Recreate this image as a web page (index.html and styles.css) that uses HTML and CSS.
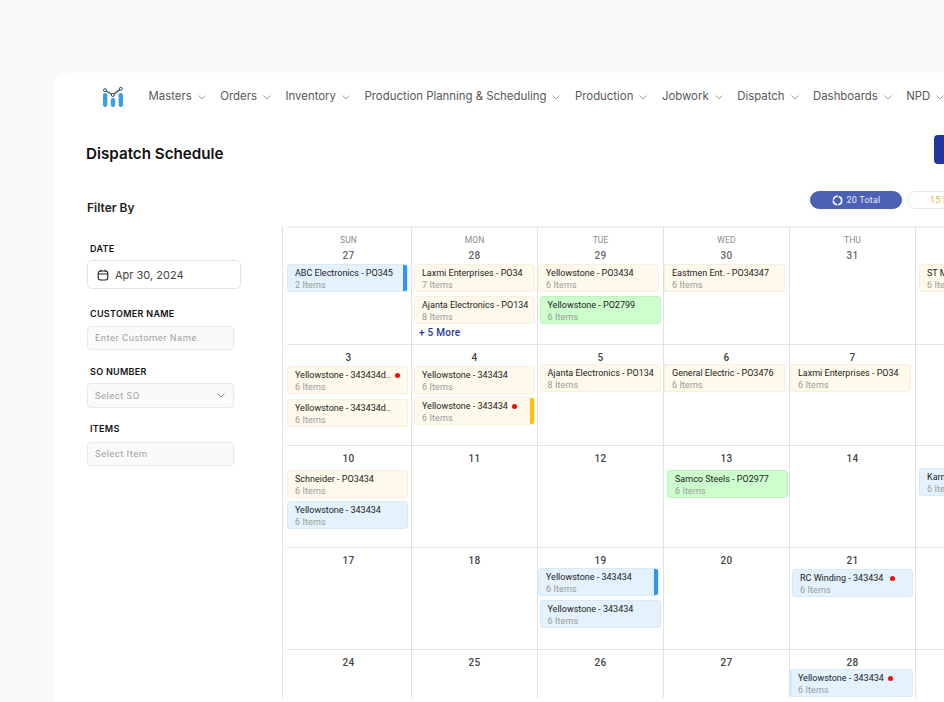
FILE: index.html
```html
<!DOCTYPE html>
<html lang="en">
<head>
<meta charset="utf-8">
<title>Dispatch Schedule</title>
<link rel="stylesheet" href="styles.css">
</head>
<body>
<div class="card">
  <nav class="nav">
    <svg class="logo" width="22" height="20" viewBox="0 0 22 20">
      <rect x="1" y="6" width="4.4" height="14" rx="2.2" fill="#3a9fe2"/>
      <rect x="8.8" y="11" width="4.4" height="9" rx="2.2" fill="#3a9fe2"/>
      <rect x="16.6" y="6" width="4.4" height="14" rx="2.2" fill="#3a9fe2"/>
      <path d="M3 3.2 L10.8 8 L18.8 1.8" fill="none" stroke="#2c4a63" stroke-width="1.3"/>
      <circle cx="3" cy="3.2" r="1.5" fill="#fff" stroke="#2c4a63"/>
      <circle cx="10.8" cy="8" r="1.5" fill="#fff" stroke="#2c4a63"/>
      <circle cx="18.8" cy="1.8" r="1.5" fill="#fff" stroke="#2c4a63"/>
    </svg>
    <ul class="menu">
      <li class="menu-item">Masters<svg class="chev" viewBox="0 0 8 5"><path d="M.5.5 4 4 7.5.5"/></svg></li>
      <li class="menu-item">Orders<svg class="chev" viewBox="0 0 8 5"><path d="M.5.5 4 4 7.5.5"/></svg></li>
      <li class="menu-item">Inventory<svg class="chev" viewBox="0 0 8 5"><path d="M.5.5 4 4 7.5.5"/></svg></li>
      <li class="menu-item">Production Planning &amp; Scheduling<svg class="chev" viewBox="0 0 8 5"><path d="M.5.5 4 4 7.5.5"/></svg></li>
      <li class="menu-item">Production<svg class="chev" viewBox="0 0 8 5"><path d="M.5.5 4 4 7.5.5"/></svg></li>
      <li class="menu-item">Jobwork<svg class="chev" viewBox="0 0 8 5"><path d="M.5.5 4 4 7.5.5"/></svg></li>
      <li class="menu-item">Dispatch<svg class="chev" viewBox="0 0 8 5"><path d="M.5.5 4 4 7.5.5"/></svg></li>
      <li class="menu-item">Dashboards<svg class="chev" viewBox="0 0 8 5"><path d="M.5.5 4 4 7.5.5"/></svg></li>
      <li class="menu-item">NPD<svg class="chev" viewBox="0 0 8 5"><path d="M.5.5 4 4 7.5.5"/></svg></li>
    </ul>
  </nav>

  <header class="title-row">
    <h1 class="title">Dispatch Schedule</h1>
    <div class="primary-btn"></div>
  </header>

  <div class="filter-row">
    <h2 class="filter-title">Filter By</h2>
    <div class="pills">
      <span class="pill pill-total">
        <svg class="ring" width="11" height="11" viewBox="0 0 11 11"><circle cx="5.5" cy="5.5" r="4.2" fill="none" stroke="#fff" stroke-width="1.6" stroke-dasharray="6 0.9"/></svg>20 Total
      </span>
      <span class="pill pill-open">15 In Progress</span>
    </div>
  </div>

  <main class="main">
    <aside class="filters">
      <label class="label label-date">DATE</label>
      <div class="date-field">
        <svg width="12" height="12" viewBox="0 0 12 12" fill="none" stroke="#222" stroke-width="1.1"><rect x="1.2" y="2" width="9.6" height="9" rx="2.4"/><path d="M1.2 5h9.6M3.8.8v2M8.2.8v2"/></svg>
        <span>Apr 30, 2024</span>
      </div>
      <label class="label label-customer">CUSTOMER NAME</label>
      <div class="field">Enter Customer Name</div>
      <label class="label">SO NUMBER</label>
      <div class="field">Select SO<svg class="field-chev" viewBox="0 0 8 5"><path d="M.5.5 4 4 7.5.5"/></svg></div>
      <label class="label">ITEMS</label>
      <div class="field field-last">Select Item</div>
    </aside>

    <section class="calendar">
      <div class="grid">
        <!-- Row 1 -->
        <div class="cell prev"><div class="dow">SUN</div><div class="num">27</div>
          <div class="ev blue"><div class="ev-t">ABC Electronics - PO345</div><div class="ev-s">2 Items</div><i class="bar bar-blue"></i></div>
        </div>
        <div class="cell prev in-2"><div class="dow">MON</div><div class="num">28</div>
          <div class="ev yellow"><div class="ev-t">Laxmi Enterprises - PO34</div><div class="ev-s">7 Items</div></div>
          <div class="ev yellow"><div class="ev-t">Ajanta Electronics - PO134</div><div class="ev-s">8 Items</div></div>
          <div class="more">+ 5 More</div>
        </div>
        <div class="cell prev"><div class="dow">TUE</div><div class="num">29</div>
          <div class="ev yellow"><div class="ev-t">Yellowstone - PO3434</div><div class="ev-s">6 Items</div></div>
          <div class="ev green nudge-2"><div class="ev-t">Yellowstone - PO2799</div><div class="ev-s">6 Items</div></div>
        </div>
        <div class="cell prev"><div class="dow">WED</div><div class="num">30</div>
          <div class="ev yellow stub-line"><div class="ev-t">Eastmen Ent. - PO34347</div><div class="ev-s">6 Items</div></div>
        </div>
        <div class="cell prev"><div class="dow">THU</div><div class="num">31</div></div>
        <div class="cell in-3 no-right"><div class="dow">FRI</div><div class="num">1</div>
          <div class="ev yellow"><div class="ev-t">ST Metals - PO3434</div><div class="ev-s">6 Items</div></div>
        </div>

        <!-- Row 2 -->
        <div class="cell wk"><div class="num">3</div>
          <div class="ev yellow"><div class="ev-t">Yellowstone - 343434d..<i class="dot"></i></div><div class="ev-s">6 Items</div></div>
          <div class="ev yellow gap-5"><div class="ev-t">Yellowstone - 343434d..</div><div class="ev-s">6 Items</div></div>
        </div>
        <div class="cell wk in-2"><div class="num">4</div>
          <div class="ev yellow"><div class="ev-t">Yellowstone - 343434</div><div class="ev-s">6 Items</div></div>
          <div class="ev yellow gap-3"><div class="ev-t">Yellowstone - 343434<i class="dot"></i></div><div class="ev-s">6 Items</div><i class="bar bar-yellow"></i></div>
        </div>
        <div class="cell wk"><div class="num">5</div>
          <div class="ev yellow nudge-2 top-1"><div class="ev-t">Ajanta Electronics - PO134</div><div class="ev-s">8 Items</div></div>
        </div>
        <div class="cell wk"><div class="num">6</div>
          <div class="ev yellow top-1 stub-line"><div class="ev-t">General Electric - PO3476</div><div class="ev-s">6 Items</div></div>
        </div>
        <div class="cell wk"><div class="num">7</div>
          <div class="ev yellow top-1"><div class="ev-t">Laxmi Enterprises - PO34</div><div class="ev-s">6 Items</div></div>
        </div>
        <div class="cell wk no-right"><div class="num">8</div></div>

        <!-- Row 3 -->
        <div class="cell wk"><div class="num">10</div>
          <div class="ev yellow top-5"><div class="ev-t">Schneider - PO3434</div><div class="ev-s">6 Items</div></div>
          <div class="ev blue gap-3"><div class="ev-t">Yellowstone - 343434</div><div class="ev-s">6 Items</div></div>
        </div>
        <div class="cell wk"><div class="num">11</div></div>
        <div class="cell wk"><div class="num">12</div></div>
        <div class="cell wk in-3"><div class="num">13</div>
          <div class="ev green top-6"><div class="ev-t">Samco Steels - PO2977</div><div class="ev-s">6 Items</div></div>
        </div>
        <div class="cell wk"><div class="num">14</div></div>
        <div class="cell wk in-3 no-right"><div class="num">15</div>
          <div class="ev blue top-4"><div class="ev-t">Karnataka - PO3434</div><div class="ev-s">6 Items</div></div>
        </div>

        <!-- Row 4 -->
        <div class="cell wk"><div class="num">17</div></div>
        <div class="cell wk"><div class="num">18</div></div>
        <div class="cell wk"><div class="num">19</div>
          <div class="ev blue top-2"><div class="ev-t">Yellowstone - 343434</div><div class="ev-s">6 Items</div><i class="bar bar-blue"></i></div>
          <div class="ev blue nudge-2"><div class="ev-t">Yellowstone - 343434</div><div class="ev-s">6 Items</div></div>
        </div>
        <div class="cell wk"><div class="num">20</div></div>
        <div class="cell wk in-2"><div class="num">21</div>
          <div class="ev blue"><div class="ev-t">RC Winding - 343434<i class="dot dot-wide"></i></div><div class="ev-s">6 Items</div></div>
        </div>
        <div class="cell wk no-right"><div class="num">22</div></div>

        <!-- Row 5 -->
        <div class="cell wk last"><div class="num">24</div></div>
        <div class="cell wk last"><div class="num">25</div></div>
        <div class="cell wk last"><div class="num">26</div></div>
        <div class="cell wk last"><div class="num">27</div></div>
        <div class="cell wk last"><div class="num">28</div>
          <div class="ev blue top-1 ev-wide"><div class="ev-t">Yellowstone - 343434<i class="dot"></i></div><div class="ev-s">6 Items</div></div>
        </div>
        <div class="cell wk last no-right"><div class="num">29</div></div>
      </div>
    </section>
  </main>
</div>
</body>
</html>
```

FILE: styles.css
```css
* { box-sizing: border-box; }
html, body { height: 100%; }
body {
  margin: 0;
  height: 702px;
  overflow: hidden;
  background: #fafafa;
  padding: 73px 0 0 54px;
  font-family: Inter, "Liberation Sans", sans-serif;
  color: #111;
}
.card {
  width: 1100px;
  height: 629px;
  background: #fff;
  border-radius: 14px 0 0 0;
  overflow: hidden;
}
.nav {
  display: flex;
  align-items: center;
  height: 46px;
  padding-left: 48px;
}
.logo { flex: none; margin-top: 1px; }
.menu {
  display: flex;
  list-style: none;
  margin: 0 0 0 24.5px;
  padding: 0;
  gap: 14.5px;
  white-space: nowrap;
}
.menu-item {
  display: flex;
  align-items: center;
  font-size: 11.4px;
  color: #585858;
}
.chev { width: 8px; height: 5px; margin-left: 6px; margin-top: 2px; fill: none; stroke: #8a8a8a; stroke-width: .8; }

.title-row {
  display: flex;
  justify-content: space-between;
  height: 29px;
  margin-top: 16px;
  padding: 0 120px 0 32px;
}
.title { margin: 10px 0 0; font-size: 15.2px; line-height: 18px; font-weight: 600; color: #111; }
.primary-btn {
  width: 100px;
  height: 29px;
  background: #1f389f;
  border-radius: 4px;
}
.filter-row {
  display: flex;
  align-items: flex-start;
  justify-content: space-between;
  height: 18px;
  margin-top: 27px;
  padding-left: 33px;
}
.filter-title { margin: 8px 0 0; font-size: 12px; line-height: 18px; font-weight: 600; color: #222; }
.pills { display: flex; gap: 5px; width: 344px; }
.pill {
  display: flex;
  align-items: center;
  justify-content: center;
  height: 18px;
  border-radius: 9px;
  font-family: Roboto, sans-serif;
  font-size: 9px;
  letter-spacing: .2px;
  white-space: nowrap;
}
.pill-total { width: 92px; background: #4a61b5; color: #e8ebf8; gap: 4px; }
.pill-open {
  width: 100px;
  justify-content: flex-start;
  padding-left: 22px;
  background: #fff;
  border: 1.5px solid #e8e8e8;
  color: #e6b93a;
}
.ring { flex: none; }

.main { display: flex; margin-top: 17px; }
.filters {
  flex: none;
  width: 195px;
  margin-left: 33px;
  padding-top: 17px;
  display: flex;
  flex-direction: column;
  align-items: flex-start;
}
.label {
  font-size: 9px;
  font-weight: 600;
  letter-spacing: .3px;
  color: #111;
  margin-left: 3px;
  margin-top: 15.5px;
  line-height: 12px;
}
.label-date { margin-top: 0; }
.label-customer { margin-top: 19px; }
.date-field {
  display: flex;
  align-items: center;
  gap: 6px;
  width: 154px;
  height: 29px;
  margin-top: 5px;
  padding-left: 9px;
  border: 1px solid #e5e5e5;
  border-radius: 5px;
  font-size: 11px;
  color: #444;
}
.field {
  display: flex;
  align-items: center;
  justify-content: space-between;
  width: 147px;
  height: 24.5px;
  margin-top: 5.5px;
  padding: 0 7px;
  background: #fafafa;
  border: 1px solid #e8e8e8;
  border-radius: 4px;
  font-family: Roboto, sans-serif;
  font-size: 9.5px;
  letter-spacing: .45px;
  color: #a2a2a2;
}
.field-last { margin-top: 6.5px; height: 24px; }
.field-chev { width: 8px; height: 5px; margin-right: 1px; fill: none; stroke: #777; stroke-width: .8; }

.calendar {
  flex: none;
  width: 800px;
  height: 471px;
  border-left: 1px solid #e2e2e2;
  padding-left: 4px;
  margin-top: 1px;
  font-family: Roboto, sans-serif;
}
.grid {
  display: grid;
  grid-template-columns: 125px repeat(5, 126px);
  grid-template-rows: 117px 101px 102px 102px 48px;
  border-top: 2px solid #efefef;
  margin-top: -1px;
}
.cell {
  border-right: 1px solid #e2e2e2;
  border-bottom: 1px solid #e4e4e4;
  min-width: 0;
  padding-top: 6px;
}
.cell:nth-child(6n+1) { padding-right: 1px; }
.cell.no-right { border-right: 0; }
.cell.last { border-bottom: 0; }
.cell.in-2 { padding-left: 2px; }
.cell.in-3 { padding-left: 3px; }
.dow {
  text-align: center;
  font-size: 8.5px;
  line-height: 12px;
  color: #8a8a8a;
  letter-spacing: .1px;
}
.num {
  text-align: center;
  font-size: 10px;
  font-weight: 500;
  line-height: 12px;
  margin: 4px 0 -1px;
  color: #444;
  letter-spacing: .3px;
}
.prev .num { color: #666; }
.wk .num { margin-top: 1px; }
.cell.in-2 .num, .cell.in-2 .dow { margin-left: -2px; }
.cell.in-3 .num, .cell.in-3 .dow { margin-left: -3px; }

.ev {
  position: relative;
  width: 121px;
  height: 28px;
  margin-top: 3px;
  padding: 2px 0 0 7px;
  border: 1px solid;
  border-radius: 3px;
  overflow: hidden;
}
.ev + .ev { margin-top: 4px; }
.ev.gap-5 { margin-top: 5px; }
.ev.gap-3 { margin-top: 3px; }
.ev.top-1 { margin-top: 1px; }
.ev.top-2 { margin-top: 2px; }
.ev.top-4 { margin-top: 4px; }
.ev.top-5 { margin-top: 5.5px; }
.ev.top-6 { margin-top: 6px; }
.nudge-2 { margin-left: 1.5px; }
.ev-wide { width: 123px; border-left: 2px solid #bcdccb; padding-left: 6px; }
.stub-line { box-shadow: -1px 0 0 #d8e8d8; }
.yellow { background: #fef9ea; border-color: #f7f0dc; }
.blue { background: #e3f2fd; border-color: #d8eaf8; }
.green { background: #ccffcc; border-color: #c0f3c0; }
.ev-t {
  display: flex;
  align-items: center;
  font-size: 9px;
  line-height: 12px;
  color: #222;
  white-space: nowrap;
}
.ev-s {
  font-size: 9px;
  line-height: 12px;
  letter-spacing: .1px;
  color: #9a9a9a;
}
.bar { position: absolute; top: -1px; right: -1px; bottom: -1px; width: 5px; border-radius: 0 3px 3px 0; }
.bar-blue { background: #2f96ef; }
.bar-yellow { background: #ffc107; }
.dot { flex: none; width: 5px; height: 5px; margin-left: 4px; border-radius: 50%; background: #f20d0d; }
.dot-wide { margin-left: 7px; }
.more {
  margin: 3px 0 0 5px;
  font-size: 10px;
  line-height: 12px;
  font-weight: 500;
  letter-spacing: .25px;
  color: #1f389f;
}
```
